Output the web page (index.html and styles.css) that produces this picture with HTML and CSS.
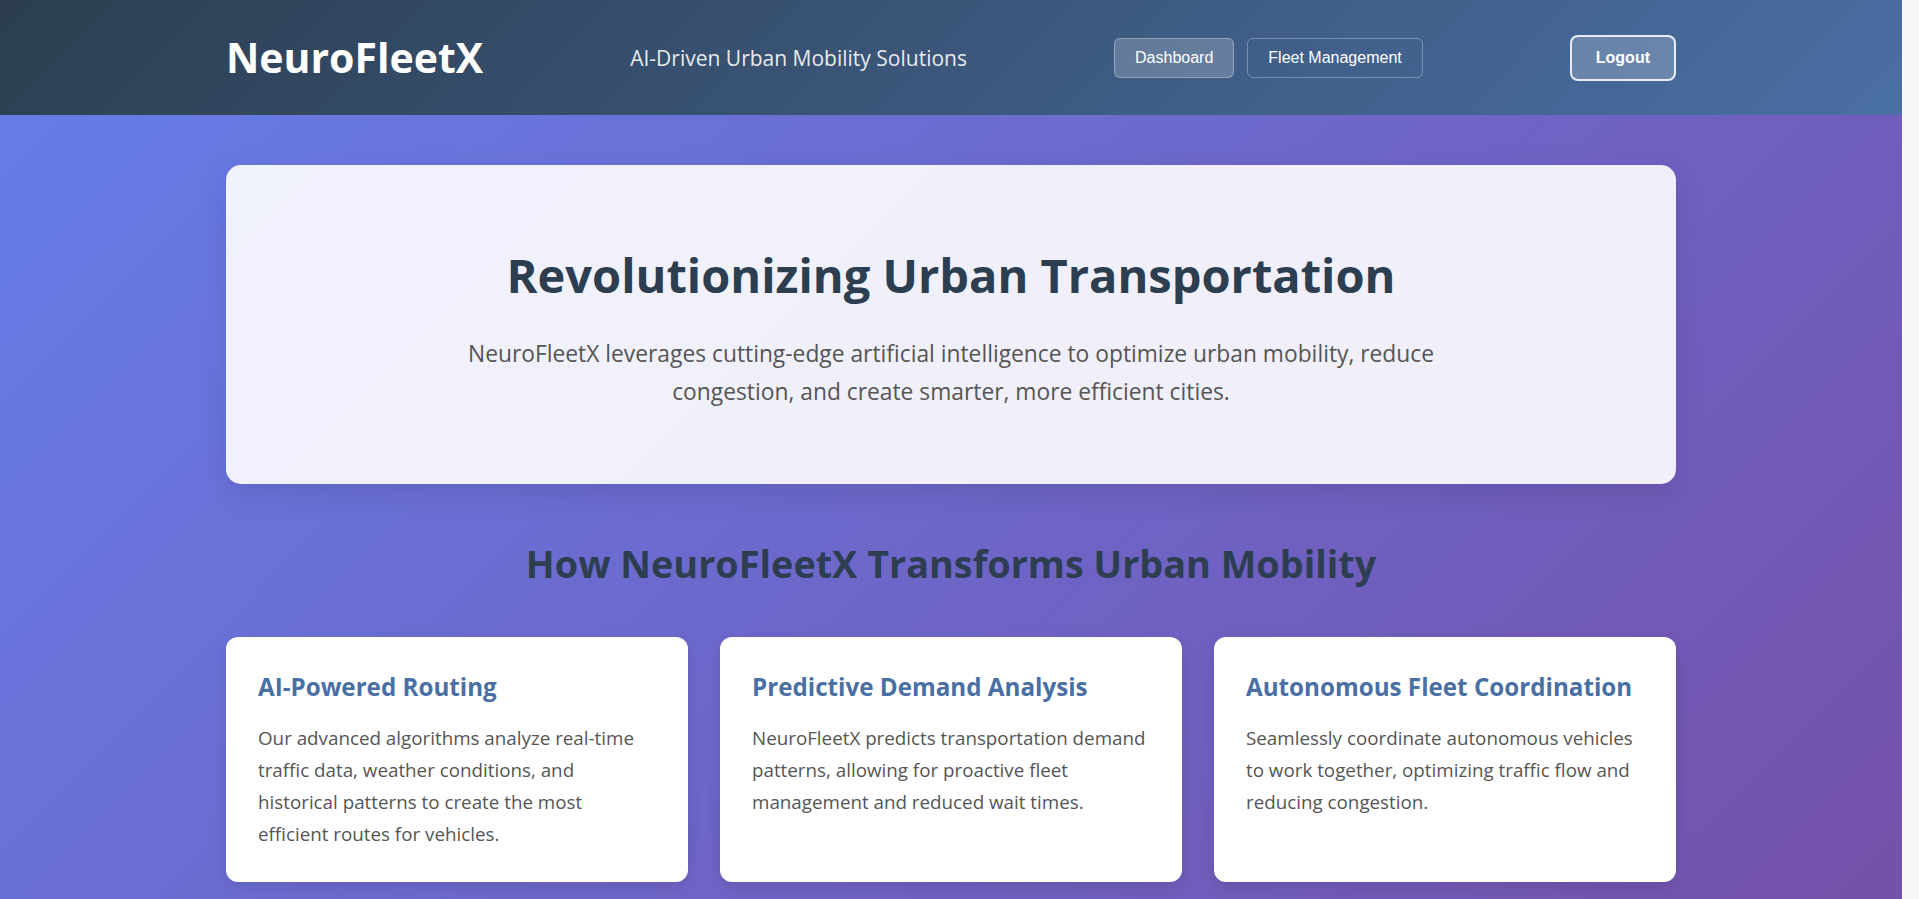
FILE: index.html
```html
<!DOCTYPE html>
<html lang="en">
<head>
<meta charset="utf-8">
<title>NeuroFleetX</title>
<link rel="stylesheet" href="styles.css">
</head>
<body>
<header class="header">
  <div class="header-inner">
    <div class="logo">NeuroFleetX</div>
    <div class="tagline">AI-Driven Urban Mobility Solutions</div>
    <nav class="nav">
      <button class="nav-btn active">Dashboard</button>
      <button class="nav-btn">Fleet Management</button>
    </nav>
    <button class="logout">Logout</button>
  </div>
</header>
<main class="main">
  <section class="hero">
    <h1 class="hero-title">Revolutionizing Urban Transportation</h1>
    <p class="hero-text">NeuroFleetX leverages cutting-edge artificial intelligence to optimize urban mobility, reduce congestion, and create smarter, more efficient cities.</p>
  </section>
  <h2 class="section-title">How NeuroFleetX Transforms Urban Mobility</h2>
  <div class="features">
    <div class="card">
      <h3 class="card-title">AI-Powered Routing</h3>
      <p class="card-text">Our advanced algorithms analyze real-time traffic data, weather conditions, and historical patterns to create the most efficient routes for vehicles.</p>
    </div>
    <div class="card">
      <h3 class="card-title">Predictive Demand Analysis</h3>
      <p class="card-text">NeuroFleetX predicts transportation demand patterns, allowing for proactive fleet management and reduced wait times.</p>
    </div>
    <div class="card">
      <h3 class="card-title">Autonomous Fleet Coordination</h3>
      <p class="card-text">Seamlessly coordinate autonomous vehicles to work together, optimizing traffic flow and reducing congestion.</p>
    </div>
  </div>
</main>
</body>
</html>
```

FILE: styles.css
```css
* {
  box-sizing: border-box;
  margin: 0;
  padding: 0;
}

/* leave room on the right as the window's scrollbar gutter does */
html {
  padding-right: 17px;
  background: #f8f8f8;
}

body {
  font-family: "Open Sans", "Noto Sans", sans-serif;
  background: linear-gradient(135deg, #667eea 0%, #764ba2 100%);
  min-height: 1280px;
  color: #333;
}

.header {
  background: linear-gradient(135deg, #2c3e50 0%, #4a6fa5 100%);
  padding: 24px 0;
}

.header-inner {
  max-width: 1450px;
  margin: 0 auto;
  display: flex;
  justify-content: space-between;
  align-items: center;
}

.logo {
  font-size: 41px;
  font-weight: 700;
  line-height: 67px;
  color: #fff;
}

.tagline {
  font-size: 21px;
  color: rgba(255, 255, 255, 0.9);
}

.nav {
  display: flex;
  gap: 13px;
}

.nav-btn {
  font-family: "Liberation Sans", Arial, sans-serif;
  font-size: 16px;
  line-height: 18px;
  color: #fff;
  background: transparent;
  border: 1px solid rgba(255, 255, 255, 0.3);
  border-radius: 6px;
  padding: 10px 20px;
  cursor: pointer;
}

.nav-btn.active {
  background: rgba(255, 255, 255, 0.2);
}

.logout {
  font-family: "Liberation Sans", Arial, sans-serif;
  font-size: 16px;
  font-weight: 700;
  line-height: 18px;
  color: #fff;
  background: rgba(255, 255, 255, 0.2);
  border: 2px solid rgba(255, 255, 255, 0.85);
  border-radius: 8px;
  padding: 12px 24px;
  cursor: pointer;
}

.main {
  max-width: 1450px;
  margin: 0 auto;
  padding: 50px 0 60px;
}

.hero {
  background: rgba(255, 255, 255, 0.9);
  border-radius: 15px;
  padding: 81px 64px 73px;
  text-align: center;
  box-shadow: 0 10px 30px rgba(0, 0, 0, 0.1);
}

.hero-title {
  font-size: 47px;
  line-height: 58px;
  font-weight: 700;
  color: #2c3e50;
  margin-bottom: 30.5px;
}

.hero-text {
  font-size: 22.8px;
  line-height: 38px;
  color: #555;
  max-width: 1040px;
  margin: 0 auto;
}

.section-title {
  font-size: 37.8px;
  line-height: 48px;
  font-weight: 700;
  color: #2c3e50;
  text-align: center;
  margin: 56.5px 0 49px;
}

.features {
  display: grid;
  grid-template-columns: repeat(3, 1fr);
  gap: 32px;
}

.card {
  background: #fff;
  border-radius: 12px;
  padding: 34px 32px 32px;
  box-shadow: 0 5px 15px rgba(0, 0, 0, 0.1);
}

.card-title {
  font-size: 24.2px;
  line-height: 1.3;
  font-weight: 700;
  color: #4a6fa5;
  white-space: nowrap;
  margin-bottom: 19.5px;
}

.card-text {
  font-size: 18.8px;
  line-height: 32px;
  color: #555;
}
```
